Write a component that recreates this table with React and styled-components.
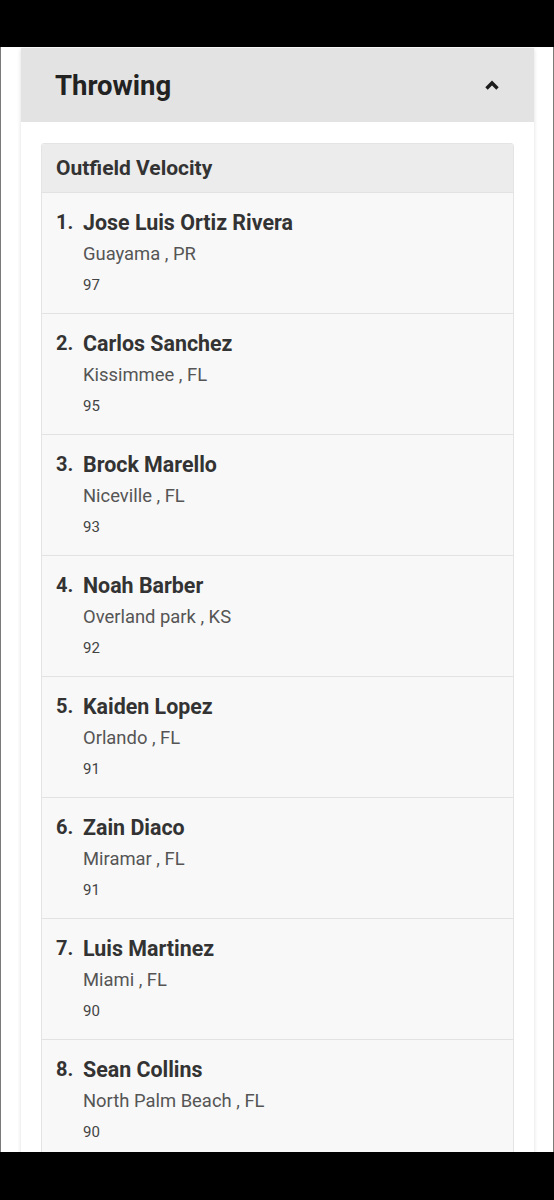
import React from "react";
import styled, { createGlobalStyle } from "styled-components";

const players = [
  { name: "Jose Luis Ortiz Rivera", city: "Guayama , PR", velo: 97 },
  { name: "Carlos Sanchez", city: "Kissimmee , FL", velo: 95 },
  { name: "Brock Marello", city: "Niceville , FL", velo: 93 },
  { name: "Noah Barber", city: "Overland park , KS", velo: 92 },
  { name: "Kaiden Lopez", city: "Orlando , FL", velo: 91 },
  { name: "Zain Diaco", city: "Miramar , FL", velo: 91 },
  { name: "Luis Martinez", city: "Miami , FL", velo: 90 },
  { name: "Sean Collins", city: "North Palm Beach , FL", velo: 90 },
];

function App() {
  return (
    <>
      <GlobalStyle />
      <Frame>
        <Screen>
          <Card>
            <CardHeader>
              <CardTitle>Throwing</CardTitle>
              <svg width="16" height="12" viewBox="0 0 16 12">
                <path
                  d="M2.5 9.5 L8 4 L13.5 9.5"
                  fill="none"
                  stroke="#1c1c1c"
                  strokeWidth="3.4"
                  strokeLinejoin="miter"
                />
              </svg>
            </CardHeader>
            <CardBody>
              <List>
                <ListHeader>Outfield Velocity</ListHeader>
                {players.map((p, i) => (
                  <Row key={i}>
                    <Rank>{i + 1}.</Rank>
                    <Info>
                      <Name>{p.name}</Name>
                      <City>{p.city}</City>
                      <Velo>{p.velo}</Velo>
                    </Info>
                  </Row>
                ))}
              </List>
            </CardBody>
          </Card>
        </Screen>
      </Frame>
    </>
  );
}

export default App;

const GlobalStyle = createGlobalStyle`
  body {
    margin: 0;
    padding: 0;
    background-color: black;
    font-family: Roboto, "Liberation Sans", sans-serif;
  }
`;

const Frame = styled.div`
  width: 554px;
  height: 1200px;
  padding: 47px 0 48px 0;
  box-sizing: border-box;
  background: black;
`;

const Screen = styled.div`
  height: 100%;
  background: #fff;
  border-left: 1px solid #7a7a7a;
  border-right: 1px solid #7a7a7a;
  padding: 1px 19px 0 20px;
  box-sizing: border-box;
  overflow: hidden;
`;

const Card = styled.div`
  background: #fff;
  box-shadow: 0 1px 4px rgba(0, 0, 0, 0.14);
`;

const CardHeader = styled.div`
  height: 74px;
  background: #e3e3e3;
  display: flex;
  align-items: center;
  justify-content: space-between;
  padding: 0 34px 0 34px;
`;

const CardTitle = styled.span`
  font-size: 27.5px;
  font-weight: 700;
  color: #222;
  padding-top: 1px;
`;

const CardBody = styled.div`
  padding: 21px 20px;
`;

const List = styled.div`
  border: 1px solid #e4e4e4;
  border-radius: 3px;
  overflow: hidden;
`;

const ListHeader = styled.div`
  height: 48px;
  background: #ececec;
  display: flex;
  align-items: center;
  padding-left: 14px;
  font-size: 21px;
  font-weight: 700;
  color: #333;
`;

const Row = styled.div`
  height: 121px;
  box-sizing: border-box;
  background: #f8f8f8;
  border-top: 1px solid #e2e2e2;
  display: flex;
  padding: 17px 14px 0 14px;
`;

const Rank = styled.span`
  width: 27px;
  font-size: 20px;
  font-weight: 700;
  color: #333;
  line-height: 25px;
`;

const Info = styled.div`
  display: flex;
  flex-direction: column;
`;

const Name = styled.span`
  font-size: 21.4px;
  font-weight: 700;
  color: #333;
  line-height: 25px;
`;

const City = styled.span`
  font-size: 18.4px;
  color: #555;
  line-height: 24px;
  margin-top: 7px;
`;

const Velo = styled.span`
  font-size: 15px;
  color: #444;
  line-height: 20px;
  margin-top: 9px;
`;
